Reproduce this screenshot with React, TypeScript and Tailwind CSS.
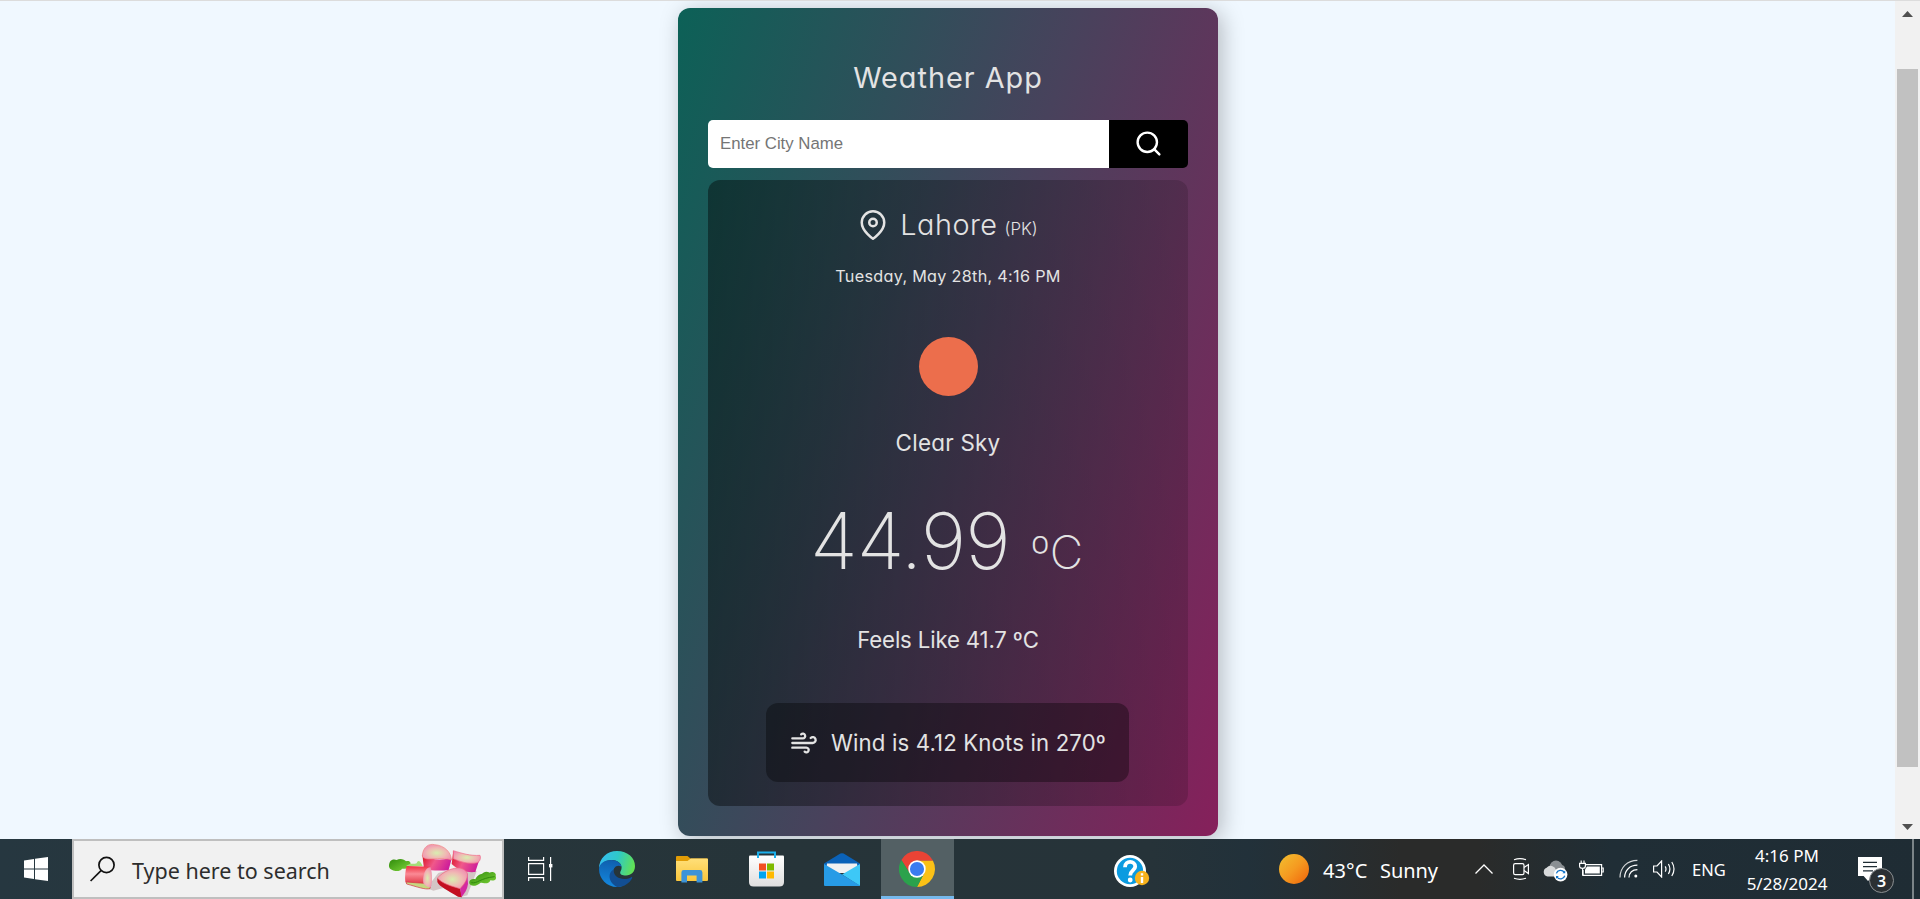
import { FiMapPin, FiSearch, FiWind } from "react-icons/fi";

function Rhubarb() {
  return (
    <svg className="h-[57px] w-[120px] shrink-0" viewBox="0 9 360 171">
      <defs>
        <radialGradient id="rf" cx="0.5" cy="0.55" r="0.65">
          <stop offset="0" stopColor="#d8eeb0" />
          <stop offset="0.5" stopColor="#f0b9b4" />
          <stop offset="1" stopColor="#f083b0" />
        </radialGradient>
        <linearGradient id="rs" x1="0" y1="0" x2="1" y2="0.3">
          <stop offset="0" stopColor="#d9101c" />
          <stop offset="0.5" stopColor="#f0588a" />
          <stop offset="1" stopColor="#d0209a" />
        </linearGradient>
        <linearGradient id="rb" x1="0" y1="0" x2="0" y2="1">
          <stop offset="0" stopColor="#ee3040" />
          <stop offset="0.35" stopColor="#fb8a95" />
          <stop offset="1" stopColor="#d20f1e" />
        </linearGradient>
        <linearGradient id="rl" x1="0" y1="0" x2="1" y2="1">
          <stop offset="0" stopColor="#2f8a0c" />
          <stop offset="1" stopColor="#7fd63a" />
        </linearGradient>
      </defs>
      <path d="M140 150L175 105L230 90L290 100L262 172L240 178L190 150L160 158Z" fill="#b9a0a0" opacity="0.55" />
      <path d="M27 82C28 64 42 62 50 66C60 60 74 64 78 70C90 66 96 76 88 84C84 94 70 92 66 92C60 102 46 98 42 98C32 96 26 90 27 82Z" fill="url(#rl)" />
      <path d="M78 84C92 72 104 80 110 76C114 64 120 68 128 84Z" fill="#a5de78" />
      <path d="M268 136C266 124 280 122 286 124C292 108 304 110 310 104C320 98 330 104 328 104C342 98 350 108 347 114C352 128 338 130 332 126C324 142 310 134 302 134C290 146 270 146 268 136Z" fill="url(#rl)" />
      <path d="M274 134C292 138 300 120 344 116" fill="none" stroke="#2f8a0c" strokeWidth="3" />
      <path d="M127 50L132 92C156 100 190 98 206 96L215 62L204 62C180 66 150 66 127 50Z" fill="url(#rs)" />
      <path d="M127 52C130 26 146 16 164 20C194 22 214 44 214 66C190 56 152 66 138 62C130 60 126 56 127 52Z" fill="url(#rf)" stroke="#f0807c" strokeWidth="2" />
      <path d="M220 38L215 78C240 100 262 104 286 102L301 56C270 74 236 60 220 38Z" fill="url(#rs)" />
      <path d="M220 38C246 46 270 54 300 52C304 62 298 72 292 74C264 80 238 70 220 62Z" fill="url(#rf)" stroke="#f06a86" strokeWidth="2" />
      <path d="M80 84L150 86C156 104 156 140 148 152L76 132C74 116 76 98 80 84Z" fill="url(#rb)" />
      <path d="M78 132L132 136L152 142L150 152C136 156 110 146 80 138Z" fill="#c6d680" stroke="#d43040" strokeWidth="2" />
      <path d="M130 136C126 112 138 84 152 88C156 104 158 136 152 148C142 148 134 142 130 136Z" fill="url(#rf)" />
      <path d="M172 120L240 150L246 178L234 176C204 158 178 146 172 132Z" fill="#c30f20" />
      <path d="M262 106L240 150L244 178C254 166 262 154 264 138Z" fill="#d42aa0" />
      <path d="M172 120C192 98 222 88 240 90C256 94 264 104 262 112C262 126 250 142 240 152C214 144 188 138 172 120Z" fill="url(#rf)" stroke="#f0667c" strokeWidth="2" />
    </svg>
  );
}

function Edge() {
  return (
    <svg className="size-9" viewBox="0 0 36 36">
      <defs>
        <linearGradient id="e1" x1="0" y1="0.3" x2="1" y2="0.5">
          <stop offset="0" stopColor="#35bdf3" />
          <stop offset="0.5" stopColor="#2fc9c6" />
          <stop offset="1" stopColor="#62e153" />
        </linearGradient>
        <linearGradient id="e2" x1="0.4" y1="0" x2="0.3" y2="1">
          <stop offset="0" stopColor="#0f5fae" />
          <stop offset="1" stopColor="#1489e0" />
        </linearGradient>
      </defs>
      <path d="M0 18C0 7 8 0 18 0C29 0 36 7 36 15C36 21 32 24.5 27 24.5C23 24.5 21 23 21.2 21.4C21.4 20 22.6 19.6 22.6 16.6C22.6 13 19 9 13 9C6 9 1 13 0 18Z" fill="url(#e1)" />
      <path d="M0 18C0.6 12 6 9 12.5 9C18 9 22.4 12.4 22.6 16C20 13.6 15.5 15 14.4 19C13 24 16 32 24 34.4C22 35.6 20 36 18 36C8 36 0 28 0 18Z" fill="url(#e2)" />
      <path d="M14.6 18.4C8 22 9.6 32 18 36C25 36.2 30.5 32 33 27.4C33.6 26.2 32.8 25.8 31.8 26.4C25 30 14 27.6 14.6 18.4Z" fill="#124e93" />
    </svg>
  );
}

function Explorer() {
  return (
    <svg className="h-[27px] w-8" viewBox="0 0 32 27">
      <defs>
        <linearGradient id="x1" x1="0" y1="0" x2="0" y2="1">
          <stop offset="0" stopColor="#ffdf79" />
          <stop offset="1" stopColor="#fac63c" />
        </linearGradient>
      </defs>
      <path d="M0 1Q0 0 1 0H11.5L14.5 2.4H31Q32 2.4 32 3.4V10H0Z" fill="#e19c06" />
      <path d="M0 5H11.5L14.8 2.6H31Q32 2.6 32 3.6V24Q32 25 31 25H1Q0 25 0 24Z" fill="url(#x1)" />
      <path d="M5.4 26.4V16.4Q5.4 14 7.8 14H24Q26.4 14 26.4 16.4V26.4H20.6V19.6H11V26.4Z" fill="#3d93d8" />
    </svg>
  );
}

function Store() {
  return (
    <svg className="h-9 w-[35px]" viewBox="0 0 35 36">
      <defs>
        <linearGradient id="s1" x1="0" y1="0" x2="0" y2="1">
          <stop offset="0" stopColor="#ffffff" />
          <stop offset="1" stopColor="#dedede" />
        </linearGradient>
      </defs>
      <path d="M0 5.5Q0 4.5 1 4.5H34Q35 4.5 35 5.5V31Q35 35.6 30.4 35.6H4.6Q0 35.6 0 31Z" fill="url(#s1)" />
      <path d="M9 7V1.6H26V7" fill="none" stroke="#1cb0ec" strokeWidth="2" />
      <path d="M10 12.5h7v7h-7z" fill="#f25022" />
      <path d="M18 12.5h7v7h-7z" fill="#7fba00" />
      <path d="M10 20.5h7v7h-7z" fill="#00a4ef" />
      <path d="M18 20.5h7v7h-7z" fill="#ffb900" />
    </svg>
  );
}

function Mail() {
  return (
    <svg className="h-[33px] w-9" viewBox="0 0 36 33">
      <path d="M0 10.6L16.4 0.6Q18 -0.2 19.6 0.6L36 10.6V20H0Z" fill="#0b62b8" />
      <path d="M3 10.6H33L34 20H2Z" fill="#f1f1f1" />
      <path d="M36 11L18 21.6L36 33Z" fill="#3dc8f7" />
      <path d="M0 11L18 21.6L36 32.4Q36 33 35 33H1Q0 33 0 32Z" fill="#279be6" />
    </svg>
  );
}

function Chrome() {
  return (
    <svg className="size-9" viewBox="0 0 48 48">
      <path d="M24 13H45.3L44.8 12A24 24 0 0 0 3.2 12L14.4 29.5Z" fill="#ea4335" />
      <path d="M24 13H45.3A24 24 0 0 1 24 48L33.5 29.5Z" fill="#fbc116" />
      <path d="M33.5 29.5L24 48A24 24 0 0 1 3.2 12L14.4 29.5Z" fill="#2ba24c" />
      <circle cx="24" cy="24" r="11.6" fill="#fff" />
      <circle cx="24" cy="24" r="9.4" fill="#3a7cf0" />
    </svg>
  );
}

function Help() {
  return (
    <svg className="h-8 w-9" viewBox="0 0 36 32">
      <circle cx="16" cy="16" r="16" fill="#fff" />
      <circle cx="16" cy="16" r="13.2" fill="#0b9be0" />
      <path d="M11 12.2C11 5.2 21.4 5.4 21.2 11.6C21.1 15.4 16.2 15.6 16.2 20.4" fill="none" stroke="#fff" strokeWidth="3.8" />
      <circle cx="16.2" cy="25" r="2.4" fill="#fff" />
      <circle cx="28" cy="23" r="7.2" fill="#f7b21c" />
      <path d="M28 18.2v2.2M28 22v6" stroke="#fff" strokeWidth="2.4" />
    </svg>
  );
}

function TrayIcons() {
  return (
    <>
      <svg className="ml-[37px] h-3 w-[18px]" viewBox="0 0 18 12" fill="none" stroke="#fff" strokeWidth="1.3">
        <path d="M0.5 10.5L9 2L17.5 10.5" />
      </svg>
      <svg className="ml-5 h-6 w-[17px]" viewBox="0 0 17 24" fill="none" stroke="#fff" strokeWidth="1.2">
        <rect x="0.6" y="6.6" width="10.4" height="11" rx="1.6" />
        <path d="M11 10.6L15.4 7.6V16.6L11 13.6M1 2.8Q7 0.6 13 2.8M1 21.2Q7 23.4 13 21.2" />
      </svg>
      <svg className="ml-[13px] mt-1 h-[22px] w-[25px]" viewBox="0 0 25 22">
        <circle cx="13" cy="7" r="6.4" fill="#8a8f93" />
        <circle cx="18" cy="9" r="4" fill="#8a8f93" />
        <path d="M4.6 16.6A4.6 4.6 0 0 1 3.6 7.8A5.4 5.4 0 0 1 13 10V16.6Z" fill="#d8dadb" />
        <circle cx="17.6" cy="14.6" r="6.8" fill="#fff" />
        <path d="M13.4 13.4A4.4 4.4 0 0 1 21.2 12.2M21.8 15.8A4.4 4.4 0 0 1 14 17" fill="none" stroke="#1173c8" strokeWidth="1.3" />
        <path d="M22.2 10.4V13.2H19.4ZM13 18.8V16H15.8Z" fill="#1173c8" />
      </svg>
      <svg className="ml-[11px] h-[18px] w-[25px]" viewBox="0 0 25 18" fill="none" stroke="#fff" strokeWidth="1.2">
        <path d="M7 4.6H22.6V15.4H4V10" />
        <path d="M8 6.6H20.8V13.6H6V9.6Z" fill="#fff" stroke="none" />
        <path d="M22.6 8H24.2V12H22.6" />
        <path d="M0.6 3.4V6Q0.6 8.4 3.6 8.4Q6.4 8.4 6.4 6V3.4ZM2.2 0.4V3.4M5 0.4V3.4M3.6 8.4V15.4" />
      </svg>
      <svg className="ml-[15px] h-5 w-[19px]" viewBox="0 0 19 20" fill="none" stroke="#fff" strokeWidth="1.2">
        <path d="M1 18.6C1 8.4 8.4 1.4 18.4 1.4" opacity="0.8" />
        <path d="M5.6 18.6C5.6 11.4 10.8 6.2 18.4 6.2" />
        <path d="M10 18.6C10 13.8 13.4 10.6 18.4 10.6" />
        <circle cx="16.8" cy="17" r="1.5" fill="#fff" stroke="none" />
      </svg>
      <svg className="ml-[15px] h-[18px] w-[23px]" viewBox="0 0 23 18" fill="none" stroke="#fff" strokeWidth="1.2">
        <path d="M0.6 6H4L8.6 1V17L4 12H0.6Z" />
        <path d="M12.2 6.4Q13.8 9 12.2 11.6M15.4 4Q18.4 9 15.4 14M18.8 2Q23.2 9 18.8 16" />
      </svg>
    </>
  );
}

function Taskbar() {
  return (
    <footer className="flex h-[60px] shrink-0 items-center bg-[linear-gradient(90deg,#263740_0%,#27363c_15%,#263439_40%,#263339_60%,#22313a_65%,#2a2b2a_73%,#2a2b2a_77%,#202e36_84%,#1f2c34_100%)] font-['Noto_Sans',sans-serif] text-white">
      <div className="flex w-[72px] shrink-0 justify-center">
        <svg className="size-6" viewBox="0 0 24 24" fill="#fff">
          <path d="M0 3.4L10 2V11.5H0ZM11 1.8L24 0V11.5H11ZM0 12.5H10V22L0 20.6ZM11 12.5H24V24L11 22.2Z" />
        </svg>
      </div>
      <div className="flex h-[60px] w-[432px] shrink-0 items-center border-2 border-[#bfbfbf] bg-[#f1f1f1] pl-4">
        <svg className="size-[26px]" viewBox="0 0 26 26" fill="none" stroke="#111" strokeWidth="1.7">
          <circle cx="16.5" cy="9" r="7.6" />
          <path d="M11 14.6L0.6 25" />
        </svg>
        <span className="ml-4 w-[248px] pt-1 text-[21.5px] whitespace-nowrap text-[#2d2d2d]">Type here to search</span>
        <Rhubarb />
      </div>
      <svg className="ml-6 h-6 w-[25px]" viewBox="0 0 25 24" fill="none" stroke="#fff" strokeWidth="1.2">
        <path d="M0.6 0V3.4H15.6V0M0.6 24V20.6H15.6V24M0.6 6.6H15.6V17.4H0.6ZM22.6 0V24" />
        <path d="M21 7H24.4V10.4H21Z" fill="#fff" stroke="none" />
      </svg>
      <div className="ml-[46px]"><Edge /></div>
      <div className="ml-[41px]"><Explorer /></div>
      <div className="ml-[41px]"><Store /></div>
      <div className="ml-10"><Mail /></div>
      <div className="ml-[21px] flex h-[60px] w-[73px] items-center justify-center border-b-[3px] border-[#76b9ed] bg-[#536064] pt-[3px] pr-px">
        <Chrome />
      </div>
      <div className="ml-40 pt-1"><Help /></div>
      <div className="ml-[129px] size-[30px] rounded-full bg-linear-to-br from-[#f0c030] via-[#f59a20] to-[#ef6008]" />
      <span className="ml-[14px] w-[57px] pt-1 text-[20px] tracking-[0.1px] whitespace-nowrap">43°C</span>
      <span className="w-[58px] pt-1 text-[20px] tracking-[-0.1px] whitespace-nowrap">Sunny</span>
      <TrayIcons />
      <span className="ml-[16px] w-[36px] pt-[3px] text-[16.5px]">ENG</span>
      <div className="ml-[13px] flex w-[92px] flex-col items-center self-start pt-[3px] text-[17px] leading-7 whitespace-nowrap">
        <span>4:16 PM</span>
        <span>5/28/2024</span>
      </div>
      <div className="relative ml-[25px] flex h-[60px] w-9 items-start pt-[18px]">
        <svg className="h-6 w-6" viewBox="0 0 24 24">
          <path d="M0 0H24V19H15L10 24L5.6 19H0Z" fill="#fff" />
          <path d="M5 5.4H19M5 9.6H19M5 13.8H15" stroke="#1f2c34" strokeWidth="1.2" />
        </svg>
        <span className="absolute top-[29px] left-[11px] flex size-[25px] items-center justify-center rounded-full border border-[#8b8f92] bg-[#2b3033] text-[16px] leading-none font-semibold">3</span>
      </div>
      <div className="ml-auto h-full w-2 border-l-2 border-[#7b8488]" />
    </footer>
  );
}

function WeatherCard() {
  return (
    <section className="flex h-[828px] w-[540px] flex-col rounded-xl bg-[linear-gradient(108deg,#0c6157_0%,#48425c_50%,#86205b_100%)] px-[30px] font-['Inter',sans-serif] text-[#e3e3e3] shadow-[4px_4px_22px_rgba(0,0,0,0.25)] [font-feature-settings:'cv11']">
      <h1 className="mt-[52px] text-center text-[28.8px] leading-9 font-normal tracking-[1px]">Weather App</h1>
      <div className="mt-6 flex h-12 shrink-0 overflow-hidden rounded-[5px]">
        <div className="flex flex-1 items-center bg-white pb-px pl-3 font-['Liberation_Sans',sans-serif] text-[16.8px] text-[#757575]">Enter City Name</div>
        <button className="flex w-[79px] items-center justify-center bg-black pb-[2px] text-white">
          <FiSearch className="size-[29px]" />
        </button>
      </div>
      <div className="mt-3 flex h-[626px] flex-col items-center rounded-xl bg-[linear-gradient(90deg,rgba(0,0,0,0.41),rgba(0,0,0,0.15))]">
        <div className="mt-[25px] flex h-10 items-center">
          <FiMapPin className="size-[30px]" />
          <div className="ml-[12px] pt-1 leading-10 whitespace-nowrap">
            <span className="text-[28.8px] font-light tracking-[0.5px]">Lahore</span>
            <span className="ml-[7px] text-[16.8px] font-light">(PK)</span>
          </div>
        </div>
        <p className="mt-[21px] text-[16.2px] leading-5 tracking-[0.3px]">Tuesday, May 28th, 4:16 PM</p>
        <div className="mt-[51px] size-[59px] rounded-full bg-[#ec6e4c]" />
        <p className="mt-8 text-[22.4px] leading-[30px] tracking-[0.25px]">Clear Sky</p>
        <div className="mt-[33px] mr-[3px] flex h-[100px] items-baseline leading-[100px] font-extralight whitespace-nowrap">
          <span className="text-[78px] tracking-[-1px]">44.99</span>
          <span className="ml-[21px] text-[46px]">ºC</span>
        </div>
        <p className="mt-[34px] text-[22.2px] leading-[30px] tracking-[-0.15px]">Feels Like 41.7 ºC</p>
        <div className="mt-12 mr-px flex h-[79px] w-[363px] items-center rounded-xl bg-black/35 pl-[24px]">
          <FiWind className="size-7" />
          <span className="ml-[13px] pt-px text-[22.2px] tracking-[0.15px] whitespace-nowrap">Wind is 4.12 Knots in 270º</span>
        </div>
      </div>
    </section>
  );
}

export default function App() {
  return (
    <div className="flex h-[899px] w-[1920px] flex-col overflow-hidden">
      <div className="flex h-[839px] shrink-0 overflow-hidden border-t border-[#dcdcdc]">
        <main className="flex w-[1895px] justify-center overflow-hidden bg-[#f0f8ff] pt-[7px] pl-px">
          <WeatherCard />
        </main>
        <div className="flex w-[25px] flex-col items-center bg-[#f1f1f1]">
          <svg className="mt-[10px] h-[6px] w-[11px]" viewBox="0 0 11 6"><path d="M0 6L5.5 0L11 6Z" fill="#505050" /></svg>
          <div className="mt-[52px] h-[698px] w-[21px] bg-[#c1c1c1]" />
          <svg className="mt-[57px] h-[6px] w-[11px]" viewBox="0 0 11 6"><path d="M0 0L5.5 6L11 0Z" fill="#505050" /></svg>
        </div>
      </div>
      <Taskbar />
    </div>
  );
}
